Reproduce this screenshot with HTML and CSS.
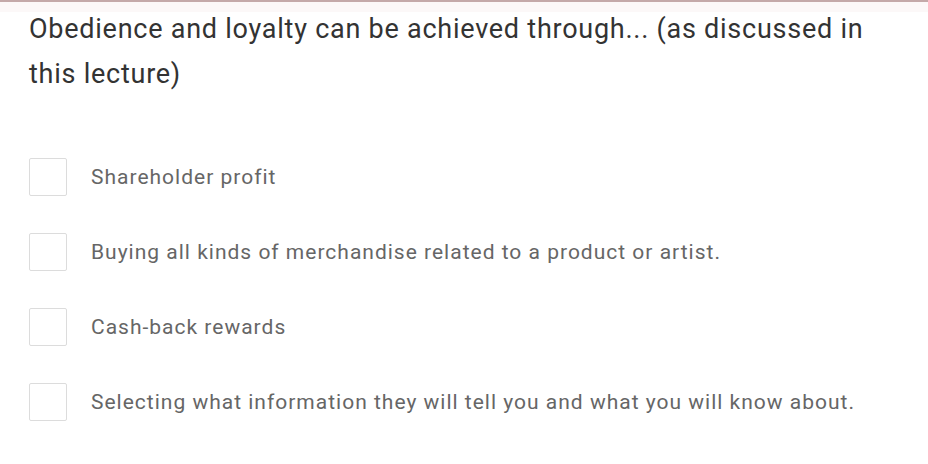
FILE: index.html
```html
<!DOCTYPE html>
<html>
<head>
<meta charset="utf-8">
<link rel="stylesheet" href="styles.css">
</head>
<body>
<div class="topbar"></div>
<main class="question">
  <h1 class="prompt">Obedience and loyalty can be achieved through... (as discussed in this lecture)</h1>
  <ul class="options">
    <li class="option"><span class="box"></span><span class="label">Shareholder profit</span></li>
    <li class="option"><span class="box"></span><span class="label">Buying all kinds of merchandise related to a product or artist.</span></li>
    <li class="option"><span class="box"></span><span class="label">Cash-back rewards</span></li>
    <li class="option"><span class="box"></span><span class="label">Selecting what information they will tell you and what you will know about.</span></li>
  </ul>
</main>
</body>
</html>
```
FILE: styles.css
```css
html, body {
  margin: 0;
  padding: 0;
  background: #ffffff;
}
body {
  font-family: Roboto, "Liberation Sans", sans-serif;
  width: 928px;
  height: 464px;
  overflow: hidden;
}
.topbar {
  height: 2px;
  background: #c4a9a9;
  border-bottom: 10px solid #fcf8f8;
}
.question {
  padding: 0 0 0 29px;
}
.prompt {
  margin: 0;
  font-weight: 400;
  font-size: 27px;
  letter-spacing: 0.75px;
  line-height: 45px;
  color: #333;
  width: 860px;
  margin-top: -5px;
}
.options {
  list-style: none;
  margin: 61px 0 0 0;
  padding: 0;
  display: flex;
  flex-direction: column;
  gap: 37px;
}
.option {
  display: flex;
  align-items: center;
  gap: 24px;
  height: 38px;
}
.box {
  width: 36px;
  height: 36px;
  border: 1px solid #dcdcdc;
  border-radius: 2px;
  flex: none;
}
.label {
  font-size: 21px;
  letter-spacing: 1px;
  color: #666;
}
```
